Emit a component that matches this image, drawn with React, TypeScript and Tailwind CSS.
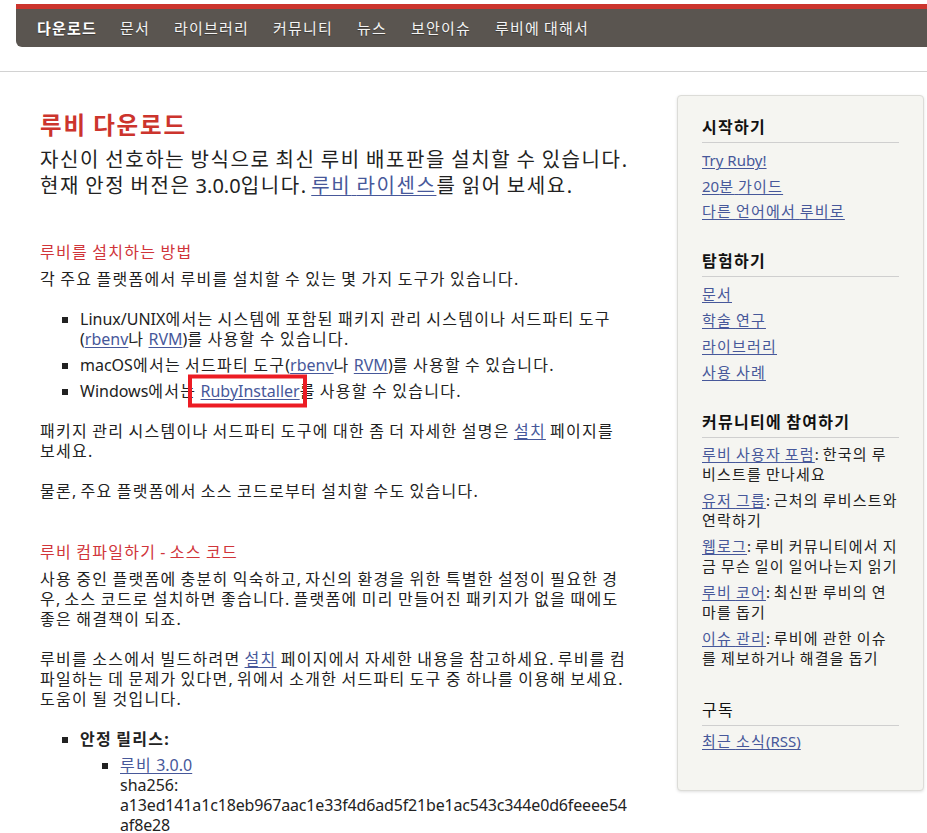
import React from "react";

const HANGUL = /([\uAC00-\uD7A3\u3131-\u318E]+)/;

function fix(node: React.ReactNode, key?: React.Key): React.ReactNode {
  if (typeof node === "string") {
    const parts = node.split(HANGUL);
    if (parts.length === 1) return node;
    return parts.map((p, i) =>
      i % 2 === 1 ? (
        <span key={i} className="tracking-[0.08em]">
          {p}
        </span>
      ) : (
        p
      )
    );
  }
  if (Array.isArray(node)) return node.map((n, i) => <React.Fragment key={i}>{fix(n, i)}</React.Fragment>);
  if (React.isValidElement(node)) {
    const el = node as React.ReactElement<{ children?: React.ReactNode }>;
    if (el.props && el.props.children !== undefined) {
      return React.cloneElement(el, key !== undefined ? { key } : {}, fix(el.props.children));
    }
    return el;
  }
  return node;
}

const A = ({ children }: { children: React.ReactNode }) => (
  <a href="#" className="text-[#47589a] underline underline-offset-[2px] decoration-[1px]">
    {children}
  </a>
);

const navItems = ["문서", "라이브러리", "커뮤니티", "뉴스", "보안이슈", "루비에 대해서"];

function SideHeading({ children, bold = true }: { children: React.ReactNode; bold?: boolean }) {
  return (
    <h3
      className={`text-[16px] leading-[20px] pb-[5px] border-b border-[#cfcfcf] text-[#111] ${
        bold ? "font-bold" : "font-normal"
      }`}
    >
      {children}
    </h3>
  );
}

export default function App() {
  const tree = (
    <div className="min-h-[833px] bg-white font-['Noto_Sans','Noto_Sans_CJK_KR',sans-serif] text-[#222]">
      {/* header */}
      <div className="pt-[4px] pl-[16px]">
        <nav className="h-[43px] border-t-[5px] border-[#cc342d] bg-[#5a5550] rounded-bl-[6px] flex items-center pl-[21px] gap-[24px] text-[15px] text-white [text-shadow:0_1px_1px_rgba(0,0,0,0.35)]">
          <a href="#" className="font-bold mr-[-1px]">다운로드</a>
          {navItems.map((n) => (
            <a href="#" key={n} className="text-[#f4f4f4]">
              {n}
            </a>
          ))}
        </nav>
      </div>
      <div className="mt-[24px] h-px bg-[#d2d2d2]" />

      <div className="flex pl-[40px]">
        {/* main */}
        <main className="w-[593px] pt-[38px] text-[16px] leading-[20px]">
          <h1 className="text-[23.5px] leading-[30px] font-bold text-[#cc342d] mb-[7px]">루비 다운로드</h1>
          <p className="text-[20px] leading-[26px] text-[#222]">
            자신이 선호하는 방식으로 최신 루비 배포판을 설치할 수 있습니다. 현재 안정 버전은 3.0.0입니다.{" "}
            <A>루비 라이센스</A>를 읽어 보세요.
          </p>

          <h2 className="mt-[43px] mb-[7px] text-[16px] leading-[20px] font-normal text-[#d0353a]">
            루비를 설치하는 방법
          </h2>
          <p>각 주요 플랫폼에서 루비를 설치할 수 있는 몇 가지 도구가 있습니다.</p>
          <ul className="mt-[20px] pl-[40px] list-[square] flex flex-col gap-[6px]">
            <li>
              Linux/UNIX에서는 시스템에 포함된 패키지 관리 시스템이나 서드파티 도구(<A>rbenv</A>나{" "}
              <A>RVM</A>)를 사용할 수 있습니다.
            </li>
            <li>
              macOS에서는 서드파티 도구(<A>rbenv</A>나 <A>RVM</A>)를 사용할 수 있습니다.
            </li>
            <li>
              Windows에서는{" "}
              <span className="relative">
                <A>RubyInstaller</A>
                <span className="absolute left-[-13px] right-[-7px] top-1/2 -translate-y-1/2 h-[33px] border-[4px] border-[#ec1c24]" />
              </span>
              를 사용할 수 있습니다.
            </li>
          </ul>
          <p className="mt-[20px]">
            패키지 관리 시스템이나 서드파티 도구에 대한 좀 더 자세한 설명은 <A>설치</A> 페이지를 보세요.
          </p>
          <p className="mt-[20px]">물론, 주요 플랫폼에서 소스 코드로부터 설치할 수도 있습니다.</p>

          <h2 className="mt-[41px] mb-[7px] text-[16px] leading-[20px] font-normal text-[#d0353a]">
            루비 컴파일하기 - 소스 코드
          </h2>
          <p>
            사용 중인 플랫폼에 충분히 익숙하고, 자신의 환경을 위한 특별한 설정이 필요한 경우, 소스 코드로
            설치하면 좋습니다. 플랫폼에 미리 만들어진 패키지가 없을 때에도 좋은 해결책이 되죠.
          </p>
          <p className="mt-[20px]">
            루비를 소스에서 빌드하려면 <A>설치</A> 페이지에서 자세한 내용을 참고하세요. 루비를 컴파일하는 데
            문제가 있다면, 위에서 소개한 서드파티 도구 중 하나를 이용해 보세요. 도움이 될 것입니다.
          </p>
          <ul className="mt-[20px] pl-[40px] list-[square]">
            <li>
              <strong className="font-bold">안정 릴리스:</strong>
              <ul className="mt-[6px] pl-[40px] list-[square]">
                <li className="break-words">
                  <A>루비 3.0.0</A>
                  <br />
                  sha256:{" "}
                  <span className="tracking-[-0.01em]">
                    a13ed141a1c18eb967aac1e33f4d6ad5f21be1ac543c344e0d6feeee54af8e28
                  </span>
                </li>
              </ul>
            </li>
          </ul>
        </main>

        {/* sidebar */}
        <aside className="ml-[44px] mt-[23px] w-[247px] h-[696px] shrink-0 bg-[#f5f5f1] border border-[#dcdcd8] rounded-[4px] shadow-[0_1px_3px_rgba(0,0,0,0.12)] pl-[24px] pr-[24px] pt-[21px] text-[15px] leading-[20px]">
          <SideHeading>시작하기</SideHeading>
          <ul className="mt-[7px] flex flex-col gap-[5.5px]">
            <li><A>Try Ruby!</A></li>
            <li><A>20분 가이드</A></li>
            <li><A>다른 언어에서 루비로</A></li>
          </ul>

          <div className="mt-[30px]">
            <SideHeading>탐험하기</SideHeading>
          </div>
          <ul className="mt-[7px] flex flex-col gap-[6px]">
            <li><A>문서</A></li>
            <li><A>학술 연구</A></li>
            <li><A>라이브러리</A></li>
            <li><A>사용 사례</A></li>
          </ul>

          <div className="mt-[30px]">
            <SideHeading>커뮤니티에 참여하기</SideHeading>
          </div>
          <ul className="mt-[6px] flex flex-col gap-[6px] text-[#222]">
            <li><A>루비 사용자 포럼</A>: 한국의 루비스트를 만나세요</li>
            <li><A>유저 그룹</A>: 근처의 루비스트와 연락하기</li>
            <li><A>웹로그</A>: 루비 커뮤니티에서 지금 무슨 일이 일어나는지 읽기</li>
            <li><A>루비 코어</A>: 최신판 루비의 연마를 돕기</li>
            <li><A>이슈 관리</A>: 루비에 관한 이슈를 제보하거나 해결을 돕기</li>
          </ul>

          <div className="mt-[32px]">
            <SideHeading bold={false}>구독</SideHeading>
          </div>
          <ul className="mt-[5px]">
            <li><A>최근 소식(RSS)</A></li>
          </ul>
        </aside>
      </div>
    </div>
  );
  return <>{fix(tree)}</>;
}
